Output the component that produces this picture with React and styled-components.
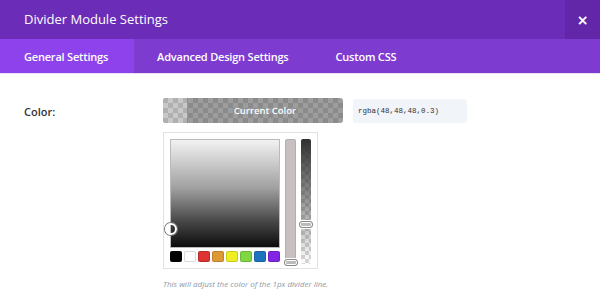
import React from "react";
import styled, { createGlobalStyle } from "styled-components";

const Global = createGlobalStyle`
  html, body { margin: 0; padding: 0; background: #fff; }
  body { font-family: "Open Sans", "Liberation Sans", sans-serif; }
  * { box-sizing: border-box; }
`;

const Modal = styled.div`
  width: 600px;
  height: 301px;
  background: #fff;
  overflow: hidden;
`;

const Header = styled.div`
  display: flex;
  height: 39px;
  background: #6b2db7;
`;

const Title = styled.h1`
  flex: 1;
  margin: 0;
  padding-left: 24px;
  font-size: 13px;
  font-weight: 400;
  line-height: 39px;
  color: #fff;
`;

const Close = styled.button`
  width: 35px;
  height: 39px;
  border: 0;
  padding: 0;
  background: #6127a8;
  color: #fff;
  font-size: 14px;
  font-weight: 700;
  font-family: "DejaVu Sans", sans-serif;
  display: flex;
  align-items: center;
  justify-content: center;
`;

const Tabs = styled.div`
  display: flex;
  height: 35px;
  background: #7d3bcf;
  border-bottom: 1px solid #e9e2f3;
`;

const Tab = styled.div`
  display: flex;
  align-items: center;
  padding: 0 ${(p) => p.$pr}px 0 ${(p) => p.$pl}px;
  background: ${(p) => (p.$active ? "#8d42eb" : "transparent")};
  color: #fff;
  font-size: 11px;
  font-weight: 600;
  letter-spacing: -0.2px;
`;

const Content = styled.div`
  display: grid;
  grid-template-columns: 163px auto;
  padding-top: 24px;
`;

const Label = styled.div`
  padding-left: 24px;
  padding-top: 6px;
  font-size: 11px;
  font-weight: 600;
  color: #333;
`;

const Field = styled.div`
  display: flex;
  flex-direction: column;
`;

const TopRow = styled.div`
  display: flex;
  align-items: center;
  gap: 10px;
`;

const checker = (a, b, s) => `
  background-color: ${a};
  background-image:
    linear-gradient(45deg, ${b} 25%, transparent 25%, transparent 75%, ${b} 75%),
    linear-gradient(45deg, ${b} 25%, transparent 25%, transparent 75%, ${b} 75%);
  background-size: ${s * 2}px ${s * 2}px;
  background-position: 0 0, ${s}px ${s}px;
`;

const ColorButton = styled.div`
  width: 180px;
  height: 25px;
  border-radius: 3px;
  overflow: hidden;
  display: flex;
  ${checker("#8b8b8b", "#9d9d9d", 5)}
`;

const Original = styled.div`
  width: 24px;
  height: 100%;
  ${checker("#b0b0b0", "#c8c8c8", 5)}
`;

const ButtonText = styled.div`
  flex: 1;
  display: flex;
  align-items: center;
  justify-content: center;
  color: #fff;
  font-size: 9.5px;
  font-weight: 600;
`;

const Input = styled.div`
  width: 114px;
  height: 24px;
  border-radius: 3px;
  background: #f1f4f8;
  display: flex;
  align-items: center;
  padding-left: 5px;
  font-family: "Liberation Mono", monospace;
  font-size: 7.5px;
  color: #333;
`;

const Picker = styled.div`
  margin-top: 9px;
  width: 155px;
  height: 137px;
  border: 1px solid #e2e2e2;
  padding: 6px;
  display: flex;
  gap: 5px;
`;

const Left = styled.div`
  display: flex;
  flex-direction: column;
  gap: 3px;
`;

const Square = styled.div`
  position: relative;
  width: 110px;
  height: 110px;
  border: 1px solid #bbb;
  background: linear-gradient(to bottom, #f2f2f2 0%, #a0a0a0 45%, #4a4a4a 75%, #0c0c0c 100%);
`;

const Handle = styled.div`
  position: absolute;
  left: -6px;
  top: 83px;
  width: 12px;
  height: 12px;
  border-radius: 50%;
  border: 2px solid #fff;
  box-shadow: 0 0 0 1px #777;
`;

const Swatches = styled.div`
  display: flex;
  gap: 2px;
`;

const Swatch = styled.div`
  width: 12px;
  height: 11px;
  border-radius: 2px;
  border: 1px solid rgba(0, 0, 0, 0.15);
  background: ${(p) => p.$c};
`;

const Slider = styled.div`
  position: relative;
  width: 12px;
  height: 125px;
  border-radius: 2px;
  ${(p) =>
    p.$alpha
      ? `${checker("#fff", "#d8d8d8", 4)}`
      : `background: #c8c0c0; border: 1px solid #b5aeae;`}
`;

const AlphaFill = styled.div`
  width: 100%;
  height: 100%;
  border-radius: 2px;
  background: linear-gradient(to bottom, #303030 0%, rgba(48, 48, 48, 0.55) 45%, rgba(48, 48, 48, 0) 100%);
`;

const SliderHandle = styled.div`
  position: absolute;
  left: -2px;
  top: ${(p) => p.$top}px;
  width: 14px;
  height: 7px;
  border-radius: 3px;
  border: 1px solid #888;
  box-shadow: inset 0 0 0 1px #fff, 0 0 0 1px #fff;
  background: #bbb;
`;

const Caption = styled.div`
  margin-top: 9px;
  font-size: 8px;
  font-style: italic;
  color: #8e98aa;
`;

const swatches = ["#000000", "#ffffff", "#dd3333", "#dd9933", "#eeee22", "#81d742", "#1e73be", "#8224e3"];

export default function App() {
  return (
    <Modal>
      <Global />
      <Header>
        <Title>Divider Module Settings</Title>
        <Close>×</Close>
      </Header>
      <Tabs>
        <Tab $active $pl={24} $pr={26}>General Settings</Tab>
        <Tab $pl={23} $pr={47}>Advanced Design Settings</Tab>
        <Tab $pl={0} $pr={0}>Custom CSS</Tab>
      </Tabs>
      <Content>
        <Label>Color:</Label>
        <Field>
          <TopRow>
            <ColorButton>
              <Original />
              <ButtonText>Current Color</ButtonText>
            </ColorButton>
            <Input>rgba(48,48,48,0.3)</Input>
          </TopRow>
          <Picker>
            <Left>
              <Square>
                <Handle />
              </Square>
              <Swatches>
                {swatches.map((c) => (
                  <Swatch key={c} $c={c} />
                ))}
              </Swatches>
            </Left>
            <Slider>
              <SliderHandle $top={119} />
            </Slider>
            <Slider $alpha>
              <AlphaFill />
              <SliderHandle $top={82} />
            </Slider>
          </Picker>
          <Caption>This will adjust the color of the 1px divider line.</Caption>
        </Field>
      </Content>
    </Modal>
  );
}
